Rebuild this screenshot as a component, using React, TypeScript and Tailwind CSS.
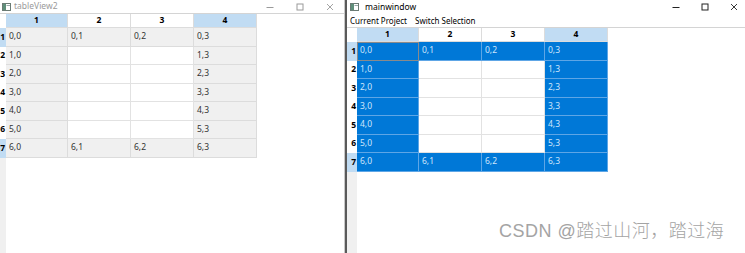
import React from "react";

const ROWS = 7;
const COLS = 4;
const COL_W = ["w-[62px]", "w-[63px]", "w-[63px]", "w-[63px]"];

function isFilled(r: number, c: number) {
  return r === 0 || r === ROWS - 1 || c === 0 || c === COLS - 1;
}

function WinIcon() {
  return (
    <svg width="9" height="8" viewBox="0 0 9 8" aria-hidden="true">
      <rect x="0.5" y="0.5" width="8" height="7" fill="#fff" stroke="#6b7b74" />
      <rect x="1" y="1" width="3" height="6" fill="#5f8f7a" />
      <rect x="4.5" y="2" width="3.5" height="1" fill="#9aa" />
    </svg>
  );
}

function Controls({ color, gap }: { color: string; gap: string }) {
  return (
    <div className={`flex items-center ${gap}`}>
      <svg width="8" height="8" viewBox="0 0 8 8" aria-hidden="true">
        <path d="M0.5 4.5h7" stroke={color} strokeWidth="1" />
      </svg>
      <svg width="8" height="8" viewBox="0 0 8 8" aria-hidden="true">
        <rect x="1" y="1" width="6" height="6" fill="none" stroke={color} strokeWidth="1" />
      </svg>
      <svg width="8" height="8" viewBox="0 0 8 8" aria-hidden="true">
        <path d="M1 1l6 6M7 1l-6 6" stroke={color} strokeWidth="0.9" />
      </svg>
    </div>
  );
}

function Table({ selected, headW }: { selected: boolean; headW: string }) {
  return (
    <div className="flex flex-col">
      {/* column header */}
      <div className="flex h-[14px]">
        <div className={`${headW} shrink-0 bg-white`} />
        {COL_W.map((w, c) => {
          const hi = c === 0 || c === COLS - 1;
          return (
            <div
              key={c}
              className={`${w} shrink-0 flex items-center justify-center border-r border-b border-[#dcdcdc] text-[8.5px] font-bold text-black ${
                hi ? "bg-[#c1dcf3]" : "bg-white"
              }`}
            >
              {c + 1}
            </div>
          );
        })}
      </div>
      {Array.from({ length: ROWS }).map((_, r) => {
        const hiRow = r === 0 || r === ROWS - 1;
        return (
          <div key={r} className="flex h-[18.5px]">
            <div
              className={`${headW} shrink-0 overflow-hidden flex items-center justify-end pr-px text-[8.5px] font-bold text-black ${
                hiRow ? "bg-[#c1dcf3]" : "bg-white"
              }`}
            >
              {r + 1}
            </div>
            {COL_W.map((w, c) => {
              const f = isFilled(r, c);
              const focus = selected && r === 0 && c === 0;
              let cls = "bg-white border-[#e2e2e2]";
              if (f) cls = selected ? "bg-[#0078d7] border-[#5ea6e6] text-[#cfe6fb]" : "bg-[#f0f0f0] border-[#dcdcdc] text-[#333]";
              return (
                <div
                  key={c}
                  className={`${w} shrink-0 flex items-center pl-[3px] border-r border-b text-[8.5px] ${cls} ${
                    focus ? "outline outline-1 -outline-offset-1 outline-[#8a8a8a]" : ""
                  }`}
                >
                  {f ? `${r},${c}` : ""}
                </div>
              );
            })}
          </div>
        );
      })}
    </div>
  );
}

export default function App() {
  return (
    <div
      className="flex w-[745px] h-[253px] overflow-hidden bg-white"
      style={{ fontFamily: '"Noto Sans", "Liberation Sans", sans-serif' }}
    >
      {/* Left window: tableView2 (inactive) */}
      <div className="w-[344px] shrink-0 flex flex-col">
        <div className="h-[14px] shrink-0 flex items-center justify-between border-b border-[#d4d4d4] pl-[2px] pr-[10px]">
          <div className="flex items-center gap-[3px]">
            <WinIcon />
            <span className="text-[8.5px] leading-none text-[#9a9a9a]">tableView2</span>
          </div>
          <Controls color="#9a9a9a" gap="gap-[22px]" />
        </div>
        <div className="flex-1 flex bg-white">
          <div className="flex flex-col">
            <Table selected={false} headW="w-[6px]" />
            <div className="flex-1 w-[6px] bg-[#f0f0f0]" />
          </div>
        </div>
      </div>

      {/* window border */}
      <div className="w-px shrink-0 bg-[#c8c8c8]" />
      <div className="w-[2px] shrink-0 bg-[#5a5a5a]" />

      {/* Right window: mainwindow (active) */}
      <div className="flex-1 flex flex-col relative">
        <div className="h-[14px] shrink-0 flex items-center justify-between pl-[3px] pr-[7px]">
          <div className="flex items-center gap-[6px]">
            <WinIcon />
            <span className="text-[8.5px] leading-none text-black">mainwindow</span>
          </div>
          <Controls color="#222" gap="gap-[21px]" />
        </div>
        <div className="h-[14px] shrink-0 flex items-center gap-[8px] pl-[3px] border-b border-[#d4d4d4] text-[8px] text-black">
          <span>Current Project</span>
          <span>Switch Selection</span>
        </div>
        <div className="flex-1 flex">
          <div className="flex flex-col">
            <Table selected={true} headW="w-[10px]" />
            <div className="flex-1 w-[10px] bg-[#f0f0f0]" />
          </div>
        </div>
        <div
          className="absolute left-[152px] top-[222px] text-[18px] leading-none text-[#a4a4a4] whitespace-nowrap tracking-[0.5px]"
          style={{
            fontFamily: '"Liberation Sans", "Noto Sans CJK SC", sans-serif',
            fontWeight: 300,
          }}
        >
          CSDN @踏过山河，踏过海
        </div>
      </div>
    </div>
  );
}
